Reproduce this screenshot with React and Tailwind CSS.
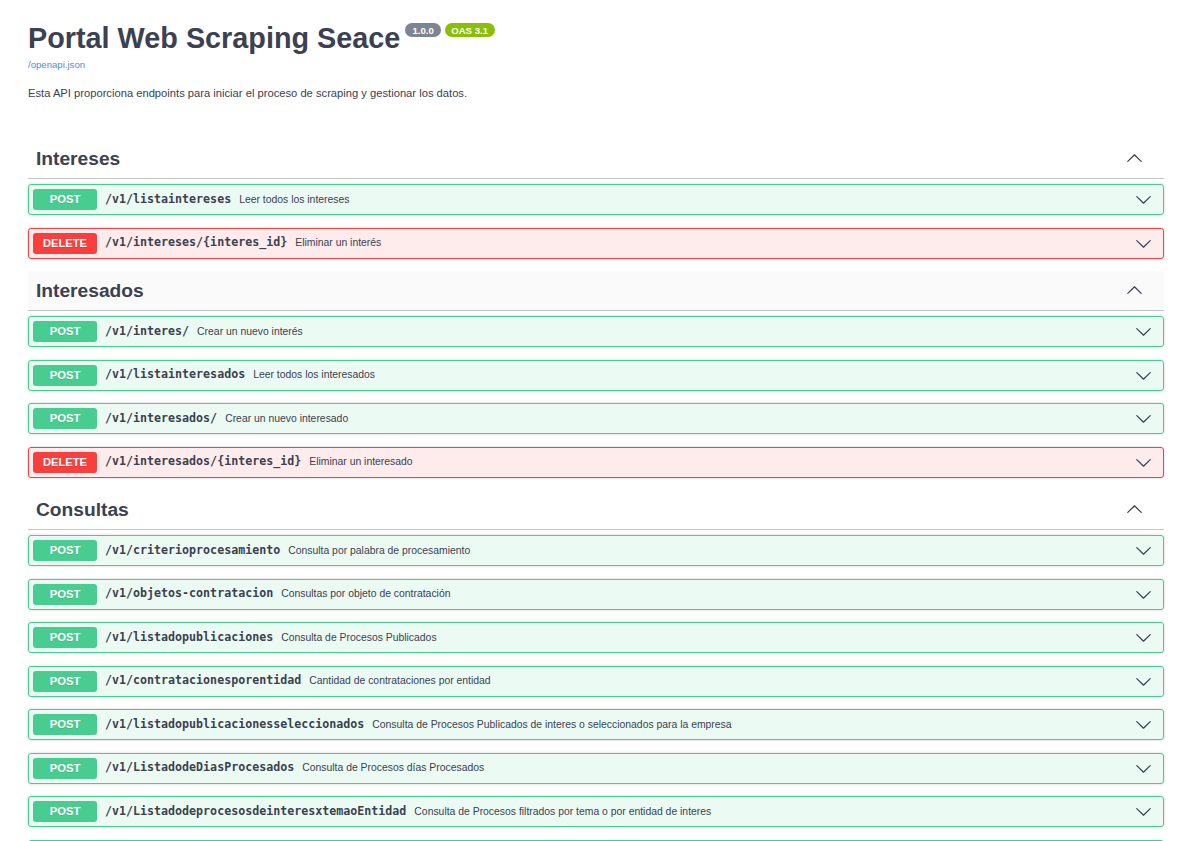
const sections = [
  {
    name: "Intereses",
    hovered: false,
    ops: [
      { method: "POST", path: "/v1/listaintereses", summary: "Leer todos los intereses" },
      { method: "DELETE", path: "/v1/intereses/{interes_id}", summary: "Eliminar un interés" },
    ],
  },
  {
    name: "Interesados",
    hovered: true,
    ops: [
      { method: "POST", path: "/v1/interes/", summary: "Crear un nuevo interés" },
      { method: "POST", path: "/v1/listainteresados", summary: "Leer todos los interesados" },
      { method: "POST", path: "/v1/interesados/", summary: "Crear un nuevo interesado" },
      { method: "DELETE", path: "/v1/interesados/{interes_id}", summary: "Eliminar un interesado" },
    ],
  },
  {
    name: "Consultas",
    hovered: false,
    more: true,
    ops: [
      { method: "POST", path: "/v1/criterioprocesamiento", summary: "Consulta por palabra de procesamiento" },
      { method: "POST", path: "/v1/objetos-contratacion", summary: "Consultas por objeto de contratación" },
      { method: "POST", path: "/v1/listadopublicaciones", summary: "Consulta de Procesos Publicados" },
      { method: "POST", path: "/v1/contratacionesporentidad", summary: "Cantidad de contrataciones por entidad" },
      {
        method: "POST",
        path: "/v1/listadopublicacionesseleccionados",
        summary: "Consulta de Procesos Publicados de interes o seleccionados para la empresa",
      },
      { method: "POST", path: "/v1/ListadodeDiasProcesados", summary: "Consulta de Procesos días Procesados" },
      {
        method: "POST",
        path: "/v1/ListadodeprocesosdeinteresxtemaoEntidad",
        summary: "Consulta de Procesos filtrados por tema o por entidad de interes",
      },
    ],
  },
];

function Chevron({ up = false }) {
  return (
    <svg
      viewBox="0 0 20 20"
      width="17"
      height="17"
      className={up ? "rotate-180" : ""}
      fill="#3b4151"
    >
      <path d="M17.418 6.109c.272-.268.709-.268.979 0s.271.701 0 .969l-7.908 7.83c-.27.268-.707.268-.979 0l-7.908-7.83c-.27-.268-.27-.701 0-.969.271-.268.709-.268.979 0L10 13.25l7.418-7.141z" />
    </svg>
  );
}

function Operation({ op }) {
  const isDelete = op.method === "DELETE";
  return (
    <div
      className={`mb-[12.5px] flex h-[31px] items-center rounded-[3px] border px-[4px] shadow-[0_0_3px_rgba(0,0,0,0.19)] ${
        isDelete
          ? "border-[#f93e3e] bg-[rgba(249,62,62,0.1)]"
          : "border-[#49cc90] bg-[rgba(73,204,144,0.1)]"
      }`}
    >
      <span
        className={`flex h-[21px] w-[64px] shrink-0 items-center justify-center rounded-[3px] text-[11.2px] font-bold text-white [text-shadow:0_1px_0_rgba(0,0,0,0.1)] ${
          isDelete ? "bg-[#f93e3e]" : "bg-[#49cc90]"
        }`}
      >
        {op.method}
      </span>
      <span className="px-[8px] font-['DejaVu_Sans_Mono',monospace] text-[11.65px] font-bold text-[#3b4151]">
        {op.path}
      </span>
      <span className="flex-1 text-[10.4px] text-[#3b4151]">{op.summary}</span>
      <span className="mr-[7px] flex items-center">
        <Chevron />
      </span>
    </div>
  );
}

export default function App() {
  return (
    <div className="min-h-screen bg-white pl-[28px] pr-[27px] pt-[22px] font-['Liberation_Sans',Arial,sans-serif] text-[#3b4151]">
      <div className="flex items-start">
        <h2 className="text-[28.8px] font-bold leading-[32px] text-[#3b4151]">Portal Web Scraping Seace</h2>
        <span className="ml-[5px] mt-[1px] rounded-full bg-[#7d8492] px-[7px] py-[1.5px] text-[9.6px] font-bold leading-[11px] text-white">
          1.0.0
        </span>
        <span className="ml-[4px] mt-[1px] rounded-full bg-[#89bf04] px-[6.5px] py-[1.5px] text-[9.6px] font-bold leading-[11px] text-white">
          OAS 3.1
        </span>
      </div>
      <a className="mt-[5px] block text-[9.6px] leading-[11px] text-[#4990e2]">/openapi.json</a>
      <p className="mt-[17px] text-[11.2px] leading-[13px] text-[#3b4151]">
        Esta API proporciona endpoints para iniciar el proceso de scraping y gestionar los datos.
      </p>

      <div className="mt-[39px]">
        {sections.map((section) => (
          <div key={section.name}>
            <div
              className={`mb-[5px] flex h-[40px] items-center justify-between border-b border-[rgba(59,65,81,0.3)] pl-[8px] pr-[21px] ${
                section.hovered ? "bg-[rgba(0,0,0,0.02)]" : ""
              }`}
            >
              <h3 className="pt-[1px] text-[19.2px] font-bold text-[#3b4151]">{section.name}</h3>
              <Chevron up />
            </div>
            {section.ops.map((op) => (
              <Operation key={op.path} op={op} />
            ))}
            {section.more && (
              <div className="h-[31px] rounded-[3px] border border-[#49cc90] bg-[rgba(73,204,144,0.1)]" />
            )}
          </div>
        ))}
      </div>
    </div>
  );
}
